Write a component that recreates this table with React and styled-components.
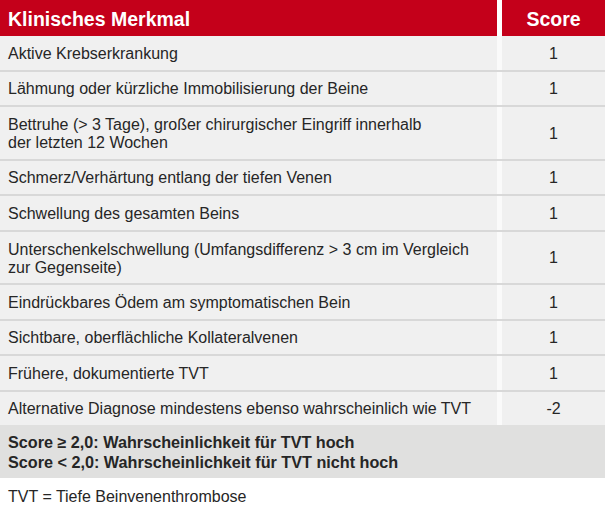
import React from 'react';
import styled, { createGlobalStyle } from 'styled-components';

const red = '#c4001a';
const text = '#262626';
const fontFamily = `font-family: "Liberation Sans", Arial, Helvetica, sans-serif;`;

const GlobalStyle = createGlobalStyle`
  body {
    margin: 0;
    background: #fff;
    ${fontFamily};
  }
`;

const Table = styled.div`
  width: 605px;
  display: flex;
  flex-direction: column;
`;

const Row = styled.div`
  display: grid;
  grid-template-columns: 497px 103px;
  column-gap: 5px;
  background: #fafafa;
  border-bottom: ${({ $last }) => ($last ? 'none' : '2px solid #d8d8d8')};
`;

const HeadRow = styled(Row)`
  background: #fff;
  border-bottom: none;
`;

const HeadCell = styled.div`
  background: ${red};
  color: #fff;
  font-weight: bold;
  font-size: 19.5px;
  height: 36px;
  display: flex;
  align-items: center;
  justify-content: ${({ $center }) => ($center ? 'center' : 'flex-start')};
  padding: 2px 8px 0;
  box-sizing: border-box;
`;

const Cell = styled.div`
  background: #f0f0f0;
  color: ${text};
  font-size: 16px;
  line-height: 18px;
  min-height: 33.5px;
  display: flex;
  align-items: center;
  justify-content: ${({ $center }) => ($center ? 'center' : 'flex-start')};
  padding: ${({ $tall }) => ($tall ? '9px 8px 6.5px' : '2px 8px 0')};
  box-sizing: border-box;
`;

const Summary = styled.div`
  background: #e0e0df;
  color: ${text};
  font-size: 16.2px;
  font-weight: bold;
  line-height: 19.5px;
  height: 53px;
  padding: 8px 8px 0;
  box-sizing: border-box;
`;

const Note = styled.div`
  color: ${text};
  font-size: 16px;
  padding: 10px 8px 0;
`;

const rows = [
  [['Aktive Krebserkrankung'], '1'],
  [['Lähmung oder kürzliche Immobilisierung der Beine'], '1'],
  [['Bettruhe (> 3 Tage), großer chirurgischer Eingriff innerhalb', 'der letzten 12 Wochen'], '1'],
  [['Schmerz/Verhärtung entlang der tiefen Venen'], '1'],
  [['Schwellung des gesamten Beins'], '1'],
  [['Unterschenkelschwellung (Umfangsdifferenz > 3 cm im Vergleich', 'zur Gegenseite)'], '1'],
  [['Eindrückbares Ödem am symptomatischen Bein'], '1'],
  [['Sichtbare, oberflächliche Kollateralvenen'], '1'],
  [['Frühere, dokumentierte TVT'], '1'],
  [['Alternative Diagnose mindestens ebenso wahrscheinlich wie TVT'], '-2'],
];

const App = () => (
  <>
    <GlobalStyle />
    <Table>
      <HeadRow>
        <HeadCell>Klinisches Merkmal</HeadCell>
        <HeadCell $center>Score</HeadCell>
      </HeadRow>
      {rows.map(([lines, score], i) => (
        <Row key={lines[0]} $last={i === rows.length - 1}>
          <Cell $tall={lines.length > 1}>
            <span>
              {lines.map((l, j) => (
                <React.Fragment key={l}>
                  {j > 0 && <br />}
                  {l}
                </React.Fragment>
              ))}
            </span>
          </Cell>
          <Cell $center>{score}</Cell>
        </Row>
      ))}
      <Summary>
        Score ≥ 2,0: Wahrscheinlichkeit für TVT hoch
        <br />
        Score &lt; 2,0: Wahrscheinlichkeit für TVT nicht hoch
      </Summary>
      <Note>TVT = Tiefe Beinvenenthrombose</Note>
    </Table>
  </>
);

export default App;
